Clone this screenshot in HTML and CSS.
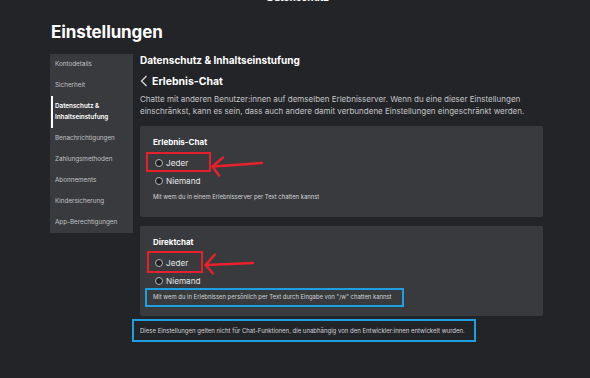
FILE: index.html
```html
<!DOCTYPE html>
<html lang="de">
<head>
<meta charset="utf-8">
<title>Einstellungen</title>
<link rel="stylesheet" href="styles.css">
</head>
<body>
<div class="page">
  <div class="topbar"><span>Datenschutz</span></div>
  <h1 class="title">Einstellungen</h1>
  <div class="layout">
    <nav class="sidebar">
      <div class="nav-item">Kontodetails</div>
      <div class="nav-item">Sicherheit</div>
      <div class="nav-item active">Datenschutz &amp;<br>Inhaltseinstufung</div>
      <div class="nav-item">Benachrichtigungen</div>
      <div class="nav-item">Zahlungsmethoden</div>
      <div class="nav-item">Abonnements</div>
      <div class="nav-item">Kindersicherung</div>
      <div class="nav-item">App-Berechtigungen</div>
    </nav>
    <main class="main">
      <h2 class="section">Datenschutz &amp; Inhaltseinstufung</h2>
      <div class="subhead">
        <svg class="chev" width="8" height="12" viewBox="0 0 8 12"><path d="M6.5 1 L1.5 6 L6.5 11" fill="none" stroke="#d6d7da" stroke-width="1.3"/></svg>
        <span>Erlebnis-Chat</span>
      </div>
      <p class="desc">Chatte mit anderen Benutzer:innen auf demselben Erlebnisserver. Wenn du eine dieser Einstellungen einschränkst, kann es sein, dass auch andere damit verbundene Einstellungen eingeschränkt werden.</p>

      <section class="card">
        <div class="card-title">Erlebnis-Chat</div>
        <div class="options">
          <div class="option"><span class="radio"></span>Jeder</div>
          <div class="option"><span class="radio"></span>Niemand</div>
        </div>
        <p class="caption">Mit wem du in einem Erlebnisserver per Text chatten kannst</p>
        <div class="redbox rb1"></div>
        <svg class="arrow" width="403" height="91" viewBox="0 0 403 91"><path d="M122 37 L73 40.5 M83 31.5 L72.5 40.5 L79 49.5" fill="none" stroke="#e8212b" stroke-width="2.4" stroke-linecap="round" stroke-linejoin="round"/></svg>
      </section>

      <section class="card">
        <div class="card-title">Direktchat</div>
        <div class="options">
          <div class="option"><span class="radio"></span>Jeder</div>
          <div class="option"><span class="radio"></span>Niemand</div>
        </div>
        <p class="caption hl">Mit wem du in Erlebnissen persönlich per Text durch Eingabe von "/w" chatten kannst</p>
        <div class="redbox rb2"></div>
        <svg class="arrow" width="403" height="90" viewBox="0 0 403 90"><path d="M113 37 L66 39 M75 28.5 L65.5 39 L73 47.5" fill="none" stroke="#e8212b" stroke-width="2.4" stroke-linecap="round" stroke-linejoin="round"/></svg>
      </section>

      <p class="note">Diese Einstellungen gelten nicht für Chat-Funktionen, die unabhängig von den Entwickler:innen entwickelt wurden.</p>
    </main>
  </div>
</div>
</body>
</html>
```

FILE: styles.css
```css
* { box-sizing: border-box; }
html, body {
  margin: 0;
  padding: 0;
  background: #232428;
  color: #ffffff;
  font-family: Inter, "Noto Sans", sans-serif;
}
.page {
  width: 590px;
  height: 378px;
  overflow: hidden;
  padding-left: 50px;
}
.topbar {
  height: 3px;
  overflow: hidden;
  text-align: center;
  margin-left: -50px;
}
.topbar span {
  display: block;
  font-size: 10px;
  font-weight: 700;
  line-height: 12px;
  margin-top: -9px;
  padding-left: 6px;
}
.title {
  margin: 19px 0 0 1px;
  font-size: 17px;
  line-height: 20px;
  font-weight: 700;
  letter-spacing: -0.1px;
}
.layout {
  display: flex;
  gap: 7px;
  margin-top: 12px;
  align-items: flex-start;
}
.sidebar {
  width: 83px;
  background: #393a3e;
  display: flex;
  flex-direction: column;
}
.nav-item {
  font-size: 6.3px;
  line-height: 11px;
  padding: 5px 0 5px 5px;
  color: #c2c3c6;
}
.nav-item.active {
  color: #ffffff;
  font-weight: 600;
  box-shadow: inset 2px 0 0 #ffffff;
  margin-left: 1px;
  padding-left: 4px;
}
.main {
  width: 403px;
  display: flex;
  flex-direction: column;
}
.section {
  margin: 0;
  font-size: 10px;
  line-height: 12px;
  font-weight: 700;
}
.subhead {
  display: flex;
  align-items: center;
  gap: 4px;
  margin-top: 8px;
  height: 14px;
  font-size: 10.5px;
  font-weight: 700;
}
.chev { display: block; margin-left: 0; }
.desc {
  margin: 6px 0 0 0;
  font-size: 8px;
  line-height: 11.5px;
  color: #c3c4c7;
  width: 395px;
}
.card {
  position: relative;
  background: #393a3e;
  border-radius: 2px;
  margin-top: 8.5px;
  padding: 11px 13px 10px 13px;
}
.card + .card { margin-top: 9px; padding-bottom: 9.5px; }
.card-title {
  font-size: 8px;
  line-height: 10px;
  font-weight: 700;
}
.options {
  display: flex;
  flex-direction: column;
  gap: 4px;
  margin-top: 9px;
}
.option {
  display: flex;
  align-items: center;
  gap: 3.5px;
  height: 14px;
  font-size: 8.2px;
  color: #e6e7e9;
}
.radio {
  width: 8px;
  height: 8px;
  margin-left: 1.5px;
  border-radius: 50%;
  border: 1px solid #b3b4b8;
  background: #1d1f22;
  flex: none;
}
.caption {
  margin: 0 0 0 -8px;
  width: fit-content;
  padding: 3.5px 10px 3.5px 6px;
  border: 2px solid transparent;
  font-size: 5.9px;
  line-height: 8px;
  color: #d2d3d6;
}
.caption.hl { border-color: #1d9fe0; }
.redbox {
  position: absolute;
  border: 2px solid #e3202b;
}
.rb1 { left: 6px; top: 26px; width: 65px; height: 20px; }
.rb2 { left: 7px; top: 25px; width: 56px; height: 22px; }
.arrow {
  position: absolute;
  left: 0;
  top: 0;
  pointer-events: none;
}
.note {
  margin: 3px 0 0 -8px;
  width: fit-content;
  white-space: nowrap;
  padding: 5.5px 9px 5.5px 6px;
  border: 2px solid #1d9fe0;
  font-size: 6px;
  line-height: 8px;
  color: #d2d3d6;
}
```
